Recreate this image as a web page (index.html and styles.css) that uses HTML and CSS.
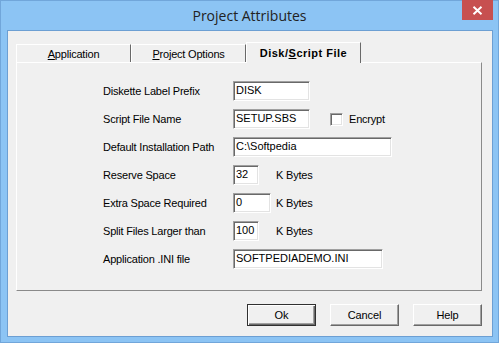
FILE: index.html
```html
<!DOCTYPE html>
<html>
<head>
<meta charset="utf-8">
<link rel="stylesheet" href="styles.css">
</head>
<body>
<div class="window">
  <div class="titlebar">
    <span class="spacer"></span>
    <span class="title">Project Attributes</span>
    <span class="controls">
      <span class="close"><svg width="11" height="9" viewBox="0 0 11 9"><path d="M1.5 0.8 L9.5 8.2 M9.5 0.8 L1.5 8.2" stroke="#fff" stroke-width="2" fill="none"/></svg></span>
    </span>
  </div>
  <div class="client">
    <div class="tabs">
      <div class="tab"><u>A</u>pplication</div>
      <div class="tab"><u>P</u>roject Options</div>
      <div class="tab active">Disk/<u>S</u>cript File</div>
    </div>
    <div class="page">
      <div class="row"><span class="lbl">Diskette Label Prefix</span><span class="input w-std">DISK</span></div>
      <div class="row"><span class="lbl">Script File Name</span><span class="input w-std">SETUP.SBS</span><span class="check"></span><span class="check-lbl">Encrypt</span></div>
      <div class="row"><span class="lbl">Default Installation Path</span><span class="input w-long">C:\Softpedia</span></div>
      <div class="row"><span class="lbl">Reserve Space</span><span class="cell"><span class="input w-short">32</span></span><span class="unit">K Bytes</span></div>
      <div class="row"><span class="lbl">Extra Space Required</span><span class="cell"><span class="input w-mid">0</span></span><span class="unit">K Bytes</span></div>
      <div class="row"><span class="lbl">Split Files Larger than</span><span class="cell"><span class="input w-short">100</span></span><span class="unit">K Bytes</span></div>
      <div class="row"><span class="lbl">Application .INI file</span><span class="input w-ini">SOFTPEDIADEMO.INI</span></div>
    </div>
    <div class="buttons">
      <span class="btn default">Ok</span>
      <span class="btn">Cancel</span>
      <span class="btn">Help</span>
    </div>
  </div>
</div>
</body>
</html>
```
FILE: styles.css
```css
html, body {
  margin: 0;
  padding: 0;
}
body {
  width: 499px;
  height: 343px;
  overflow: hidden;
  background: #8cc4f4;
  font-family: "Liberation Sans", Arial, sans-serif;
  font-size: 11px;
  color: #000;
}
.window {
  width: 499px;
  height: 343px;
  box-sizing: border-box;
  border: 1px solid #71a6da;
  background: #8cc4f4;
  display: flex;
  flex-direction: column;
}
.titlebar {
  height: 29px;
  display: grid;
  grid-template-columns: 1fr auto 1fr;
  align-items: start;
}
.title {
  font-family: "Open Sans", "Noto Sans", sans-serif;
  font-size: 14px;
  line-height: 29px;
  color: #222;
  padding-top: 0px;
}
.controls {
  justify-self: end;
  margin-right: 5px;
  margin-top: -1px;
}
.close {
  width: 31px;
  height: 20px;
  background: #c75050;
  display: flex;
  align-items: center;
  justify-content: center;
}
.client {
  margin: 0 5px 5px 6px;
  border: 1px solid #6c9fd3;
  background: #f0f0f0;
  flex: 1;
  padding: 11px 10px 10px 8px;
  display: flex;
  flex-direction: column;
}
.tabs {
  height: 20px;
  display: flex;
  align-items: flex-end;
  position: relative;
  z-index: 1;
}
.tab {
  width: 115px;
  height: 18px;
  box-sizing: border-box;
  border-top: 1px solid #fff;
  border-left: 1px solid #fff;
  border-right: 1px solid #696969;
  display: flex;
  align-items: center;
  justify-content: center;
  letter-spacing: -0.2px;
  padding-top: 1px;
}
.tab.active {
  height: 21px;
  margin-bottom: -1px;
  background: #f0f0f0;
  font-weight: bold;
  letter-spacing: 0.5px;
  padding-bottom: 2px;
}
.page {
  height: 229px;
  box-sizing: border-box;
  border-top: 1px solid #fff;
  border-left: 1px solid #fff;
  border-right: 1px solid #8a8a8a;
  border-bottom: 1px solid #8a8a8a;
  padding: 18px 0 0 86px;
  display: flex;
  flex-direction: column;
  gap: 8px;
}
.row {
  height: 20px;
  display: flex;
  align-items: center;
  letter-spacing: -0.2px;
}
.lbl {
  width: 130px;
  flex: none;
}
.cell {
  width: 43px;
  flex: none;
}
.input {
  display: block;
  height: 20px;
  box-sizing: border-box;
  background: #fff;
  border-top: 1px solid #a0a0a0;
  border-left: 1px solid #a0a0a0;
  border-right: 1px solid #fff;
  border-bottom: 1px solid #fff;
  box-shadow: inset 1px 1px 0 #696969, inset -1px -1px 0 #e3e3e3;
  padding: 0 0 0 2px;
  line-height: 17px;
  letter-spacing: 0;
}
.w-short { width: 26px; }
.w-mid { width: 38px; }
.w-std { width: 77px; }
.w-long { width: 159px; }
.w-ini { width: 150px; }
.check {
  width: 13px;
  height: 13px;
  box-sizing: border-box;
  margin-left: 20px;
  background: #fff;
  border-top: 1px solid #a0a0a0;
  border-left: 1px solid #a0a0a0;
  border-right: 1px solid #fff;
  border-bottom: 1px solid #fff;
  box-shadow: inset 1px 1px 0 #696969, inset -1px -1px 0 #e3e3e3;
}
.check-lbl {
  margin-left: 6px;
}
.buttons {
  margin-top: 13px;
  display: flex;
  justify-content: flex-end;
  gap: 14px;
}
.btn {
  width: 69px;
  height: 22px;
  box-sizing: border-box;
  display: flex;
  align-items: center;
  justify-content: center;
  background: #f0f0f0;
  border-top: 1px solid #fff;
  border-left: 1px solid #fff;
  border-right: 1px solid #696969;
  border-bottom: 1px solid #696969;
  box-shadow: inset -1px -1px 0 #a0a0a0;
  letter-spacing: -0.1px;
}
.btn.default {
  border: 1px solid #303030;
  box-shadow: inset 1px 1px 0 #fff, inset -1px -1px 0 #696969, inset -2px -2px 0 #a0a0a0;
}
```
